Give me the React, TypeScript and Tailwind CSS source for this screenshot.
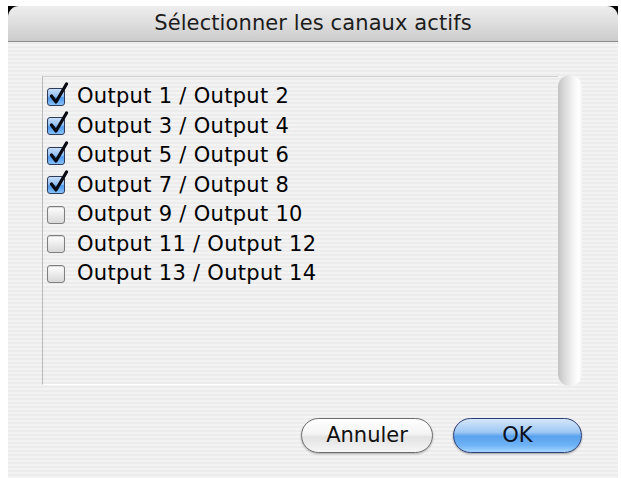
import React from "react";

const channels = [
  { label: "Output 1 / Output 2", on: true },
  { label: "Output 3 / Output 4", on: true },
  { label: "Output 5 / Output 6", on: true },
  { label: "Output 7 / Output 8", on: true },
  { label: "Output 9 / Output 10", on: false },
  { label: "Output 11 / Output 12", on: false },
  { label: "Output 13 / Output 14", on: false },
];

function Checkbox({ on }: { on: boolean }) {
  if (!on) {
    return (
      <span className="relative block h-[18px] w-[18px] shrink-0 rounded-[3px] border border-[#7e7e7e] bg-gradient-to-b from-[#ffffff] to-[#d8d8d8] shadow-[inset_0_1px_1px_rgba(0,0,0,0.15)]" />
    );
  }
  return (
    <span className="relative block h-[18px] w-[18px] shrink-0 rounded-[3px] border border-[#2e3a58] bg-[linear-gradient(to_bottom,#c6defa_0%,#92c0f3_45%,#4f98ec_55%,#86c2fb_100%)]">
      <svg
        viewBox="0 0 20 22"
        className="absolute -top-[7px] left-[1px] h-[23px] w-[20px]"
        fill="none"
      >
        <path
          d="M2.5 13.5 L7 19.5 L17.5 1.5"
          stroke="#0a0a12"
          strokeWidth="3.2"
          strokeLinecap="round"
          strokeLinejoin="round"
        />
      </svg>
    </span>
  );
}

export default function App() {
  return (
    <div
      className="h-[478px] w-[621px] overflow-hidden bg-white pl-2 pr-[3px] pt-[6px]"
      style={{ fontFamily: '"DejaVu Sans", "Noto Sans", sans-serif' }}
    >
      <div className="h-full bg-black">
        <div className="flex h-full flex-col overflow-hidden rounded-t-[11px]">
          {/* barre de titre */}
          <div className="flex h-[36px] shrink-0 items-center justify-center border-b border-[#8d8d8d] bg-gradient-to-b from-[#eeeeee] via-[#dedede] to-[#cbcbcb] text-[21px] tracking-[0.1px] text-[#1c1c1c]">
            Sélectionner les canaux actifs
          </div>

          <div className="flex flex-1 flex-col bg-[repeating-linear-gradient(to_bottom,#ececec_0px,#ececec_2px,#f3f3f3_2px,#f3f3f3_4px)] pl-[34px] pr-[36px] pt-[34px]">
            <div className="flex h-[309px]">
              <div className="flex-1 border-l border-t border-b border-l-[#b9b9b9] border-t-[#d2d2d2] border-b-white pl-[4px] pt-[5px]">
                {channels.map((c) => (
                  <div key={c.label} className="flex h-[29.5px] items-center gap-[12px]">
                    <Checkbox on={c.on} />
                    <span className="text-[21px] leading-none tracking-[0.3px] text-black">{c.label}</span>
                  </div>
                ))}
              </div>
              <div className="-mt-[1px] h-[311px] w-[24px] rounded-[12px] bg-[linear-gradient(to_right,#c2c2c2_0%,#d8d8d8_25%,#f2f2f2_60%,#ffffff_85%,#f4f4f4_100%)]" />
            </div>

            <div className="mt-[33px] flex justify-end gap-[20px]">
              <button
                type="button"
                className="flex h-[35px] w-[132px] items-center justify-center rounded-full border border-[#6b6b6b] bg-[linear-gradient(to_bottom,#ffffff_0%,#f4f4f4_45%,#e2e2e2_55%,#f6f6f6_100%)] text-[21px] text-[#111] shadow-[0_1px_2px_rgba(0,0,0,0.3)]"
              >
                Annuler
              </button>
              <button
                type="button"
                className="flex h-[35px] w-[129px] items-center justify-center rounded-full border border-[#2b3f78] bg-[linear-gradient(to_bottom,#d5e6fa_0%,#9ec8f3_40%,#5aa2ee_52%,#6fb3f6_80%,#a6d6ff_100%)] text-[21px] text-[#0d1020] shadow-[0_1px_2px_rgba(0,0,0,0.35)]"
              >
                OK
              </button>
            </div>
          </div>
        </div>
      </div>
    </div>
  );
}
